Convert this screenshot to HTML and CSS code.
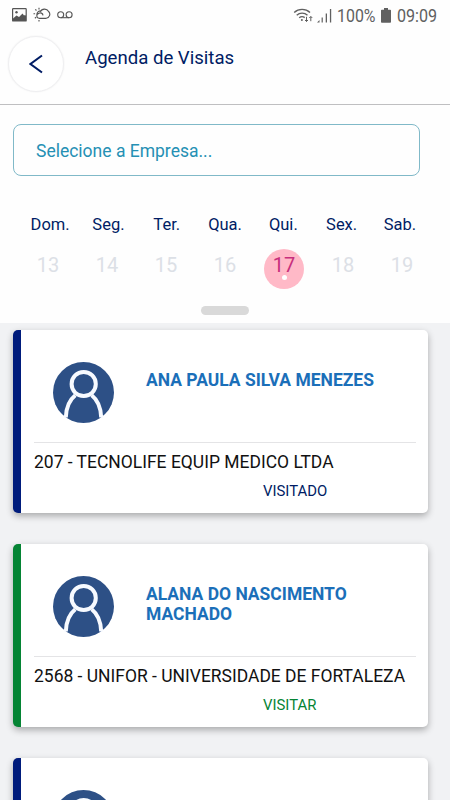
FILE: index.html
```html
<!DOCTYPE html>
<html lang="pt-BR">
<head>
<meta charset="utf-8">
<title>Agenda de Visitas</title>
<link rel="stylesheet" href="styles.css">
</head>
<body>
<svg width="0" height="0" class="defs" aria-hidden="true">
  <symbol id="person" viewBox="0 0 61 61">
    <circle cx="30.5" cy="30.5" r="30.5" fill="#2d5086"/>
    <g fill="none" stroke="#f7faff" stroke-width="4">
      <circle cx="30.700" cy="22" r="12.1"/>
      <path d="M12.8 55.500C13.2 45 17 37.500 22.300 33.300M48.200 55.500C47.800 45 44 37.500 38.700 33.300"/>
    </g>
  </symbol>
</svg>
<div class="statusbar">
  <div class="notifications">
    <svg width="15" height="14" viewBox="0 0 15 14"><rect x=".6" y=".6" width="13.600" height="12.400" rx=".6" fill="#fff" stroke="#555" stroke-width="1.200"/><path d="M1 10.500l3.500-3 2.500 1.500 3.500-3.500 1.500 2 1-.5 1 .8V13H1z" fill="#555"/><circle cx="4.500" cy="4.300" r="1.200" fill="#555"/></svg>
    <svg width="18" height="15" viewBox="0 0 18 15" fill="none" stroke="#555" stroke-width="1.150"><path d="M5.900 11.300a2.500 2.500 0 0 1-.2-4.900 2.700 2.700 0 0 1 4.300 2M4 8.200a3.500 3.500 0 0 1 3.300-4.300M7.300 4.900A4.600 4.600 0 0 1 15.600 4.500 4 4 0 0 1 13.200 11.300H5.900"/><path stroke-dasharray="1.600 1.200" d="M6 .8v1.900M2.300 2.400l1.400 1.300M.5 6.700h1.900M1.900 11.200l1.400-1.200M6 13v1.600"/></svg>
    <svg width="16" height="8" viewBox="0 0 16 8" fill="none" stroke="#555" stroke-width="1.100"><circle cx="3.700" cy="3.700" r="3"/><circle cx="12.100" cy="3.700" r="3"/><path d="M3.700 6.700h8.400"/></svg>
  </div>
  <div class="system">
    <svg class="wifi" width="21" height="15" viewBox="0 0 20 15" fill="none" stroke="#606060" stroke-width="1.350"><path d="M.7 4.500a11.500 11.500 0 0 1 15.800 0M3.200 7.200a8 8 0 0 1 10.800 0M5.700 9.800a4.500 4.500 0 0 1 5.500-.2"/><circle cx="8.400" cy="12" r="1" fill="#606060" stroke="none"/><path stroke-width="1" d="M13 8.800v4.700M11.500 12l1.500 1.500 1.500-1.500M17.300 13.200V8.500M15.800 10l1.500-1.500 1.500 1.500"/></svg>
    <svg class="signal" width="15" height="15" viewBox="0 0 15 15" fill="#606060"><path d="M0 14.500l2.500-2.500v2.500zM4.600 9.500h1.200v5H4.600zM8.700 5.500h1.300v9H8.700zM12.900 1h1.300v13.500h-1.300z"/></svg>
    <span class="percent">100%</span>
    <svg class="battery" width="10" height="15" viewBox="0 0 10 15"><path d="M3 0h4v1.700h2.200q.8 0 .8.800V14q0 .8-.8.800H.8Q0 14.800 0 14V2.500q0-.8.800-.8H3z" fill="#606060"/></svg>
    <span class="clock">09:09</span>
  </div>
</div>
<header class="appbar">
  <button class="back" aria-label="Voltar"><svg width="14" height="20" viewBox="0 0 14 20" fill="none" stroke="#001c64" stroke-width="2"><path d="M13 1.500L1.500 10 13 18.500"/></svg></button>
  <h1>Agenda de Visitas</h1>
</header>
<section class="filters">
  <div class="company"><span>Selecione a Empresa...</span></div>
  <div class="weekdays"><span>Dom.</span><span>Seg.</span><span>Ter.</span><span>Qua.</span><span>Qui.</span><span>Sex.</span><span>Sab.</span></div>
  <div class="dates"><span>13</span><span>14</span><span>15</span><span>16</span><span class="selected">17</span><span>18</span><span>19</span></div>
  <div class="handle"></div>
</section>
<main class="visits">
  <article class="card">
    <div class="person"><svg class="avatar"><use href="#person"/></svg><h2>ANA PAULA SILVA MENEZES</h2></div>
    <p class="client">207 - TECNOLIFE EQUIP MEDICO LTDA</p>
    <p class="state">VISITADO</p>
  </article>
  <article class="card pending">
    <div class="person"><svg class="avatar"><use href="#person"/></svg><h2>ALANA DO NASCIMENTO<br>MACHADO</h2></div>
    <p class="client">2568 - UNIFOR - UNIVERSIDADE DE FORTALEZA</p>
    <p class="state">VISITAR</p>
  </article>
  <article class="card">
    <div class="person"><svg class="avatar"><use href="#person"/></svg></div>
  </article>
</main>
</body>
</html>
```
FILE: styles.css
```css
* { box-sizing: border-box; margin: 0; padding: 0; }
body { height: 800px; overflow: hidden; background: #fefefe; font-family: Roboto, sans-serif; color: #001c64; }
svg { display: block; flex: none; }
.defs { position: absolute; }
.statusbar { height: 32px; display: flex; justify-content: space-between; padding: 0 12px 0 12px; color: #606060; }
.notifications { display: flex; align-items: center; gap: 6px; height: 29px; }
.system { display: flex; align-items: center; height: 31px; font-size: 18.500px; white-space: nowrap; }
.wifi { margin-right: 3px; }
.signal { margin-right: 5px; }
.percent, .clock { transform-origin: left; }
.percent { width: 38px; transform: scaleX(.86); }
.battery { margin: 0 6px; }
.clock { width: 41px; transform: scaleX(.87); }
.appbar { height: 73px; border-bottom: 1px solid #bfbfc1; display: flex; padding: 4px 8px 0; }
.back { flex: none; width: 56px; height: 56px; border: 1px solid #efeff1; border-radius: 50%; background: #fff; display: grid; place-items: center; box-shadow: 0 0 2px #eee; }
h1 { font-size: 18.600px; font-weight: 400; line-height: 24px; margin: 10px 0 0 21px; white-space: nowrap; }
.filters { height: 218px; padding-top: 19px; display: flex; flex-direction: column; }
.company { margin-left: 13px; width: 407px; height: 52px; border: 1px solid #80b9c8; border-radius: 8px; padding-left: 22px; color: #2590b4; font-size: 17.500px; line-height: 52px; }
.weekdays { display: grid; grid-template-columns: repeat(7, 58.300px); margin: 39px 0 0 21px; height: 20px; line-height: 20px; font-size: 16.500px; text-align: center; }
.dates { display: grid; grid-template-columns: repeat(7, 59px); margin: 14px 0 0 18.500px; height: 40px; line-height: 32px; font-size: 20px; color: #dce0e6; text-align: center; }
.selected { justify-self: center; position: relative; width: 40px; height: 40px; border-radius: 50%; background: #ffb9c7; color: #c72e7c; }
.selected::after { content: ""; position: absolute; left: 17.500px; top: 26px; width: 5px; height: 5px; border-radius: 50%; background: #fff; }
.handle { width: 48px; height: 9px; margin: 17px 0 0 201px; border-radius: 5px; background: #d9d9d9; }
.visits { height: 477px; background: #f1f2f4; padding: 6.500px 22px 0 13px; display: flex; flex-direction: column; gap: 31px; overflow: hidden; }
.card { flex: none; height: 183px; border-radius: 5px; border-left: 8px solid #001c7c; background: #fff; box-shadow: 0 3px 7px rgba(0,0,0,.3); padding: 0 12px 0 13px; }
.pending { border-left-color: #058434; }
.person { height: 113.500px; border-bottom: 1px solid #e4e4e6; display: flex; padding: 32px 0 0 19px; }
.avatar { width: 61px; height: 61px; }
h2 { margin: 8.300px 0 0 32px; font-size: 17.480px; font-weight: 700; line-height: 20.500px; color: #1b6fb9; white-space: nowrap; }
.client { height: 38px; line-height: 39px; font-size: 17.480px; color: #111; white-space: nowrap; }
.state { margin-left: 229px; font-size: 14.900px; line-height: 20px; color: #001c64; }
.pending .state { color: #058434; }
```
